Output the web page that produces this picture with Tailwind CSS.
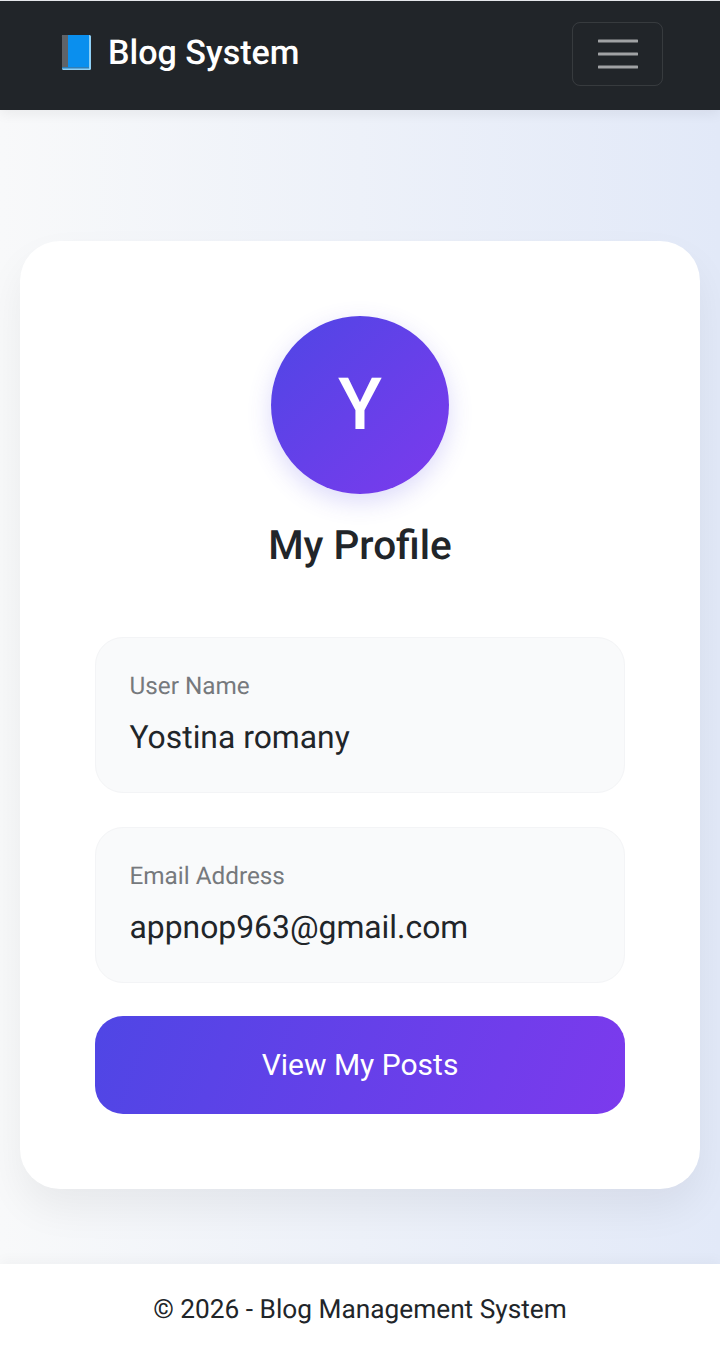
<!DOCTYPE html>
<html><head><meta charset="utf-8"><script src="https://cdn.jsdelivr.net/npm/@tailwindcss/browser@4"></script></head>
<body class="font-['Roboto',sans-serif] bg-white [text-rendering:geometricPrecision]">
<div class="w-[720px] h-[1352px] flex flex-col overflow-hidden">
<header class="relative z-10 h-[110px] shrink-0 border-t border-t-[#e5e7eb] bg-[#212529] flex items-center justify-between pl-[60px] pr-[57px] shadow-[0_4px_12px_rgba(0,0,0,0.06)]">
<div class="flex items-center gap-[14px] -mt-[5px]">
<svg class="w-[34px] h-[36px]" viewBox="0 0 34 36"><rect x="2" y="0" width="29" height="35" rx="1.5" fill="#8fd0f5"/><rect x="2" y="0" width="27" height="32" fill="#0a8fee"/><rect x="2" y="0" width="6" height="33" fill="#5f6368"/><rect x="2" y="32" width="27" height="1.5" fill="#2f7fb8"/></svg>
<span class="text-[34.1px] leading-[48px] font-medium text-white">Blog System</span>
</div>
<button class="w-[91px] h-[64px] -mt-[3px] rounded-[8px] border-[1.5px] border-white/10 flex items-center justify-center">
<svg width="40" height="30" viewBox="0 0 40 30"><path d="M1 2h38M1 15h38M1 28h38" stroke="#a0a2a4" stroke-width="3" stroke-linecap="round"/></svg>
</button>
</header>
<main class="flex-1 bg-[linear-gradient(90deg,#f8f9fa_0%,#e2e9f8_100%)] px-[20px] pt-[131px]">
<section class="h-[948px] bg-white rounded-[40px] px-[75px] pt-[75px] shadow-[0_20px_40px_rgba(0,0,0,0.06)] flex flex-col items-center">
<div class="w-[178px] h-[178px] shrink-0 rounded-full bg-[linear-gradient(135deg,#4f46e5,#7c3aed)] flex items-center justify-center text-white text-[72px] font-medium leading-none shadow-[0_8px_24px_rgba(79,70,229,0.2)]">Y</div>
<h1 class="mt-[25px] text-[40.5px] leading-[52px] font-medium text-[#212529]">My Profile</h1>
<div class="w-full mt-[66px] h-[156px] rounded-[28px] bg-[#f9fafb] border-[1.5px] border-[#f3f4f6] pl-[33.5px] pr-[34px] pt-[30px]">
<p class="text-[24.3px] leading-[36px] text-[#76797d]">User Name</p>
<p class="mt-[9px] text-[31.85px] leading-[48px] text-[#212529]">Yostina romany</p>
</div>
<div class="w-full mt-[34px] h-[156px] rounded-[28px] bg-[#f9fafb] border-[1.5px] border-[#f3f4f6] pl-[33.5px] pr-[34px] pt-[30px]">
<p class="text-[24.3px] leading-[36px] text-[#76797d]">Email Address</p>
<p class="mt-[9px] text-[31.85px] leading-[48px] text-[#212529]">appnop963@gmail.com</p>
</div>
<button class="w-full mt-[33px] h-[98px] rounded-[28px] bg-[linear-gradient(110deg,#4f46e5,#7c3aed)] text-white text-[30px] flex items-center justify-center"><span class="-mt-[2px]">View My Posts</span></button>
</section>
</main>
<footer class="relative h-[88px] shrink-0 bg-white flex items-center justify-center text-[26.25px] text-[#212529] shadow-[0_-4px_12px_rgba(0,0,0,0.03)]"><span class="mt-[6px]">© 2026 - Blog Management System</span></footer>
</div>
</body></html>
